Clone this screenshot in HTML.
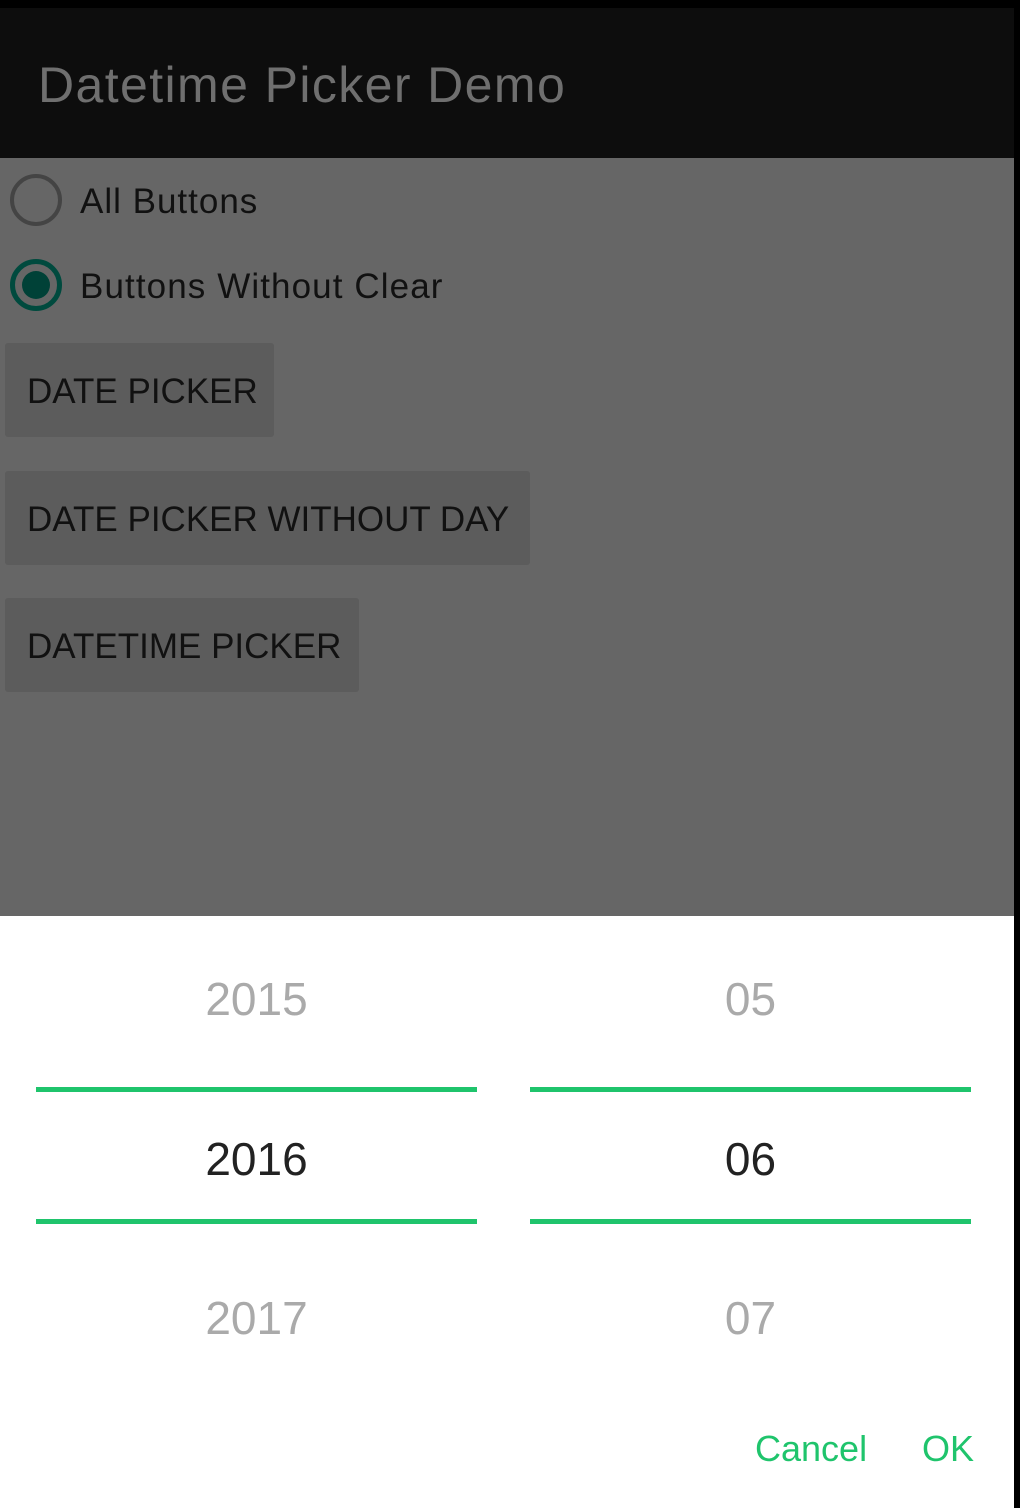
<!DOCTYPE html>
<html><head><style>
body{margin:0;width:1020px;height:1508px;background:#000;font-family:"Liberation Sans",sans-serif;position:relative;overflow:hidden}
.a{position:absolute;white-space:nowrap}
.btn{position:absolute;left:5px;background:#5c5c5c;border-radius:3px;height:94px;color:#111;font-size:35px;line-height:98px;padding:0 22px;box-sizing:border-box;white-space:nowrap}
.n{position:absolute;width:441px;text-align:center;font-size:46px}
.g{position:absolute;height:5px;width:441px;background:#1fc46c}
</style></head><body>
<div class="a" style="left:0;top:8px;width:1014px;height:150px;background:#0d0d0d"></div>
<div class="a" style="left:38px;top:56px;font-size:50px;color:#6f6f6f;letter-spacing:1.4px">Datetime Picker Demo</div>
<div class="a" style="left:0;top:158px;width:1014px;height:758px;background:#666"></div>
<div class="a" style="left:10px;top:174px;width:52px;height:52px;border:4px solid #444;border-radius:50%;box-sizing:border-box"></div>
<div class="a" style="left:80px;top:182px;font-size:35px;color:#111;letter-spacing:1px">All Buttons</div>
<div class="a" style="left:10px;top:259px;width:52px;height:52px;border:5px solid #004a3e;border-radius:50%;box-sizing:border-box"></div>
<div class="a" style="left:22px;top:271px;width:28px;height:28px;background:#004137;border-radius:50%"></div>
<div class="a" style="left:80px;top:267px;font-size:35px;color:#111;letter-spacing:1.1px">Buttons Without Clear</div>
<div class="btn" style="top:343px;width:269px">DATE PICKER</div>
<div class="btn" style="top:471px;width:525px">DATE PICKER WITHOUT DAY</div>
<div class="btn" style="top:598px;width:354px">DATETIME PICKER</div>
<div class="a" style="left:0;top:916px;width:1014px;height:592px;background:#fff"></div>
<div class="n" style="left:36px;top:972px;color:#aaa">2015</div>
<div class="n" style="left:530px;top:972px;color:#aaa">05</div>
<div class="g" style="left:36px;top:1087px"></div><div class="g" style="left:530px;top:1087px"></div>
<div class="n" style="left:36px;top:1132px;color:#222">2016</div>
<div class="n" style="left:530px;top:1132px;color:#222">06</div>
<div class="g" style="left:36px;top:1219px"></div><div class="g" style="left:530px;top:1219px"></div>
<div class="n" style="left:36px;top:1291px;color:#aaa">2017</div>
<div class="n" style="left:530px;top:1291px;color:#aaa">07</div>
<div class="a" style="left:755px;top:1428px;font-size:36px;color:#1fc46c">Cancel</div>
<div class="a" style="left:922px;top:1428px;font-size:36px;color:#1fc46c">OK</div>
</body></html>
